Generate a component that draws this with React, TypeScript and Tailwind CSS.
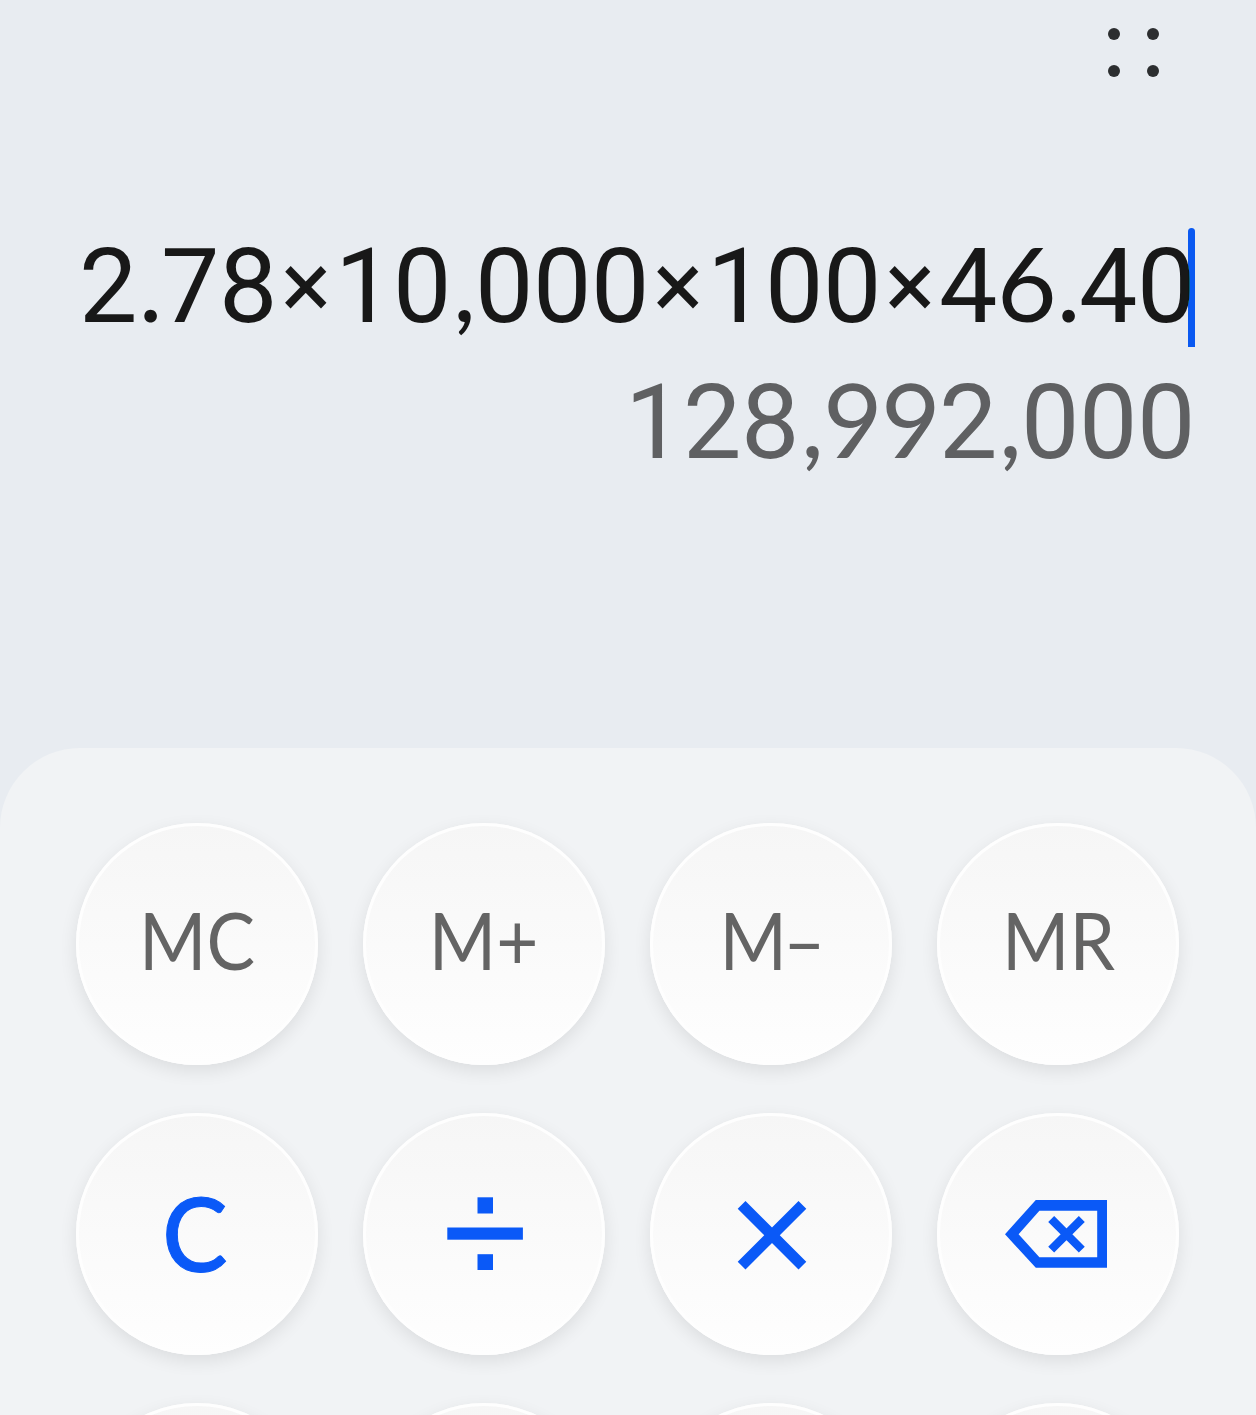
import React from "react";
import clsx from "clsx";

type KeyType = "memory" | "action" | "digit";

interface CalcKey {
  id: string;
  type: KeyType;
  content?: React.ReactNode;
}

const DivideIcon = () => (
  <svg viewBox="0 0 242 242" className="size-full" fill="currentColor">
    <rect x="114.5" y="84.3" width="15.5" height="16.2"/>
    <rect x="84.3" y="114.5" width="75.6" height="12.2"/>
    <rect x="114.5" y="141.2" width="15.5" height="15.8"/>
  </svg>
)

const MultiplyIcon = () => (
  <svg viewBox="0 0 242 242" className="size-full" fill="none" stroke="currentColor" strokeWidth="11">
    <path d="M91.6 91.8 152.4 152.6M152.4 91.8 91.6 152.6"/>
  </svg>
)

const BackspaceIcon = () => (
  <svg viewBox="0 0 242 242" className="size-full" fill="currentColor">
    <path
      fillRule="evenodd"
      d="M68 121.2 98.8 87H170v67.8H98.8ZM81.6 121.2 102.4 97.8H160.2V144.2H102.4Z"
    />
    <path d="M114.2 106 144.8 136.6M144.8 106 114.2 136.6" stroke="currentColor" strokeWidth="8.4"/>
  </svg>
)

const keys: CalcKey[] = [
  {id: "mc", type: "memory", content: "MC"},
  {id: "m-plus", type: "memory", content: "M+"},
  {id: "m-minus", type: "memory", content: <span className="-tracking-[4px]">M–</span>},
  {id: "mr", type: "memory", content: "MR"},
  {id: "clear", type: "action", content: <span className="mr-1 mb-0.5 scale-x-96 [-webkit-text-stroke:1px]">C</span>},
  {id: "divide", type: "action", content: <DivideIcon/>},
  {id: "multiply", type: "action", content: <MultiplyIcon/>},
  {id: "backspace", type: "action", content: <BackspaceIcon/>},
  {id: "seven", type: "digit"},
  {id: "eight", type: "digit"},
  {id: "nine", type: "digit"},
  {id: "minus", type: "digit"},
];

// digits share one width, separators are narrower
const figureClass = (char: string) => {
  switch (char) {
    case ",":
    case ".":
      return "w-[24px] pl-px font-['Lato',sans-serif] text-[96px] font-medium -tracking-[2px]"
    case "6":
    case "9":
      return "w-[58px] font-['Lato',sans-serif] text-[103px]"
    case "×":
      return "w-[58px] text-[94px] align-[4px]"
    default:
      return "w-[58px]"
  }
}

const Figures: React.FC<{ value: string }> = ({value}) => (
  <span>
    {value.split("").map((char, i) => (
      <span key={i} className={clsx("inline-block text-center", figureClass(char))}>
        {char}
      </span>
    ))}
  </span>
)

const KeyButton: React.FC<CalcKey> = ({id, type, content}) => (
  <button
    aria-label={id}
    className={clsx(
      "flex size-[242px] items-center justify-center rounded-full bg-linear-to-b from-[#f6f6f6] to-[#fefefe]",
      "shadow-[inset_0_0_0_3px_#fefefe,0_6px_18px_rgba(0,0,0,0.09)]",
      type === "memory" && "pb-[10px] text-[79px] leading-none text-[#646464]",
      type === "action" && "text-[102px] leading-none font-medium text-[#0a59f7]",
    )}
  >
    {type === "memory" ? <span className="scale-x-92">{content}</span> : content}
  </button>
)

export default function App() {
  return (
    <div className="flex h-[1415px] w-[1256px] flex-col overflow-hidden bg-[#e8ecf1] font-['Lato',sans-serif]">
      {/* Menu */}
      <header className="flex h-[105px] justify-end pt-[28px] pr-[97px]">
        <button aria-label="menu" className="grid h-[49px] w-[51px] grid-cols-2 content-between justify-between">
          {[0, 1, 2, 3].map(dot => (
            <span key={dot} className="size-3 rounded-full bg-[#2c2e30] even:justify-self-end"/>
          ))}
        </button>
      </header>

      {/* Display */}
      <section className="flex h-[643px] flex-col items-end pt-[123px] pr-[61px] font-['Roboto',sans-serif] text-[104px]">
        <div className="relative h-[119px] leading-[108px] whitespace-nowrap text-[#181818]">
          <Figures value="2.78×10,000×100×46.40"/>
          <span className="absolute top-0 right-0 h-[119px] w-[7px] rounded-t-full bg-[#0a59f7] mix-blend-darken"/>
        </div>
        <div className="mt-4 h-[119px] leading-[111px] whitespace-nowrap text-[#5f6062]">
          <Figures value="128,992,000"/>
        </div>
      </section>

      {/* Keypad */}
      <main className="grid h-[667px] shrink-0 grid-cols-[repeat(4,242px)] content-start gap-x-[45px] gap-y-12 rounded-t-[80px] bg-[#f1f3f5] pt-[75px] pl-[76px]">
        {keys.map(key => <KeyButton {...key} key={key.id}/>)}
      </main>
    </div>
  );
}
